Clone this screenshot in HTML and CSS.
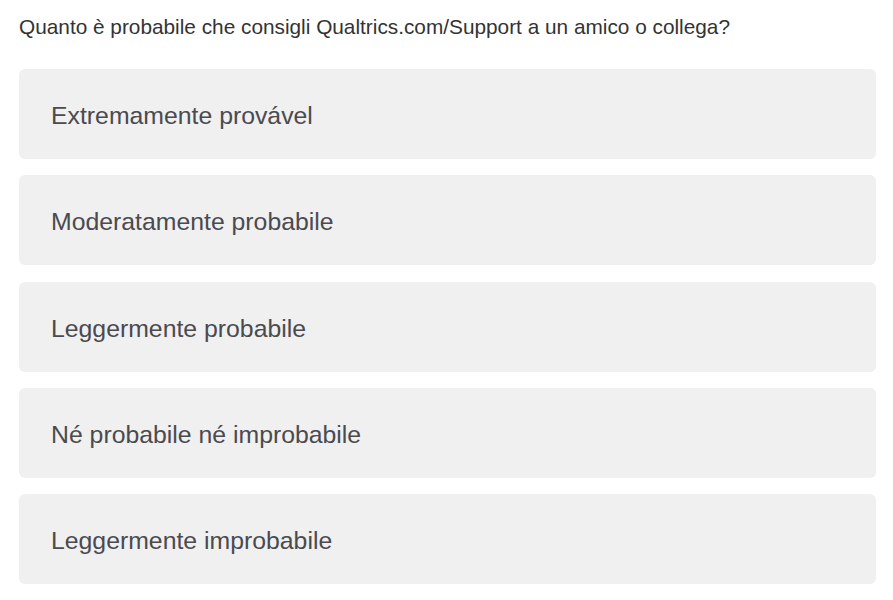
FILE: index.html
```html
<!DOCTYPE html>
<html lang="it">
<head>
<meta charset="utf-8">
<link rel="stylesheet" href="styles.css">
</head>
<body>
<div class="survey">
  <p class="question">Quanto è probabile che consigli Qualtrics.com/Support a un amico o collega?</p>
  <ul class="options">
    <li class="option">Extremamente provável</li>
    <li class="option">Moderatamente probabile</li>
    <li class="option">Leggermente probabile</li>
    <li class="option">Né probabile né improbabile</li>
    <li class="option">Leggermente improbabile</li>
  </ul>
</div>
</body>
</html>
```
FILE: styles.css
```css
html, body {
  margin: 0;
  padding: 0;
  background: #ffffff;
}
body {
  font-family: "Liberation Sans", Arial, sans-serif;
}
.survey {
  padding: 14px 17px 0 19px;
}
.question {
  margin: 0;
  font-size: 20.8px;
  line-height: 26px;
  color: #333333;
}
.options {
  list-style: none;
  margin: 29px 0 0 0;
  padding: 0;
  display: flex;
  flex-direction: column;
  gap: 16.25px;
}
.option {
  height: 90px;
  box-sizing: border-box;
  display: flex;
  align-items: center;
  padding-left: 32px;
  padding-top: 4px;
  background: #f0f0f0;
  border-radius: 6px;
  font-size: 24.8px;
  color: #4a4a4f;
}
```
